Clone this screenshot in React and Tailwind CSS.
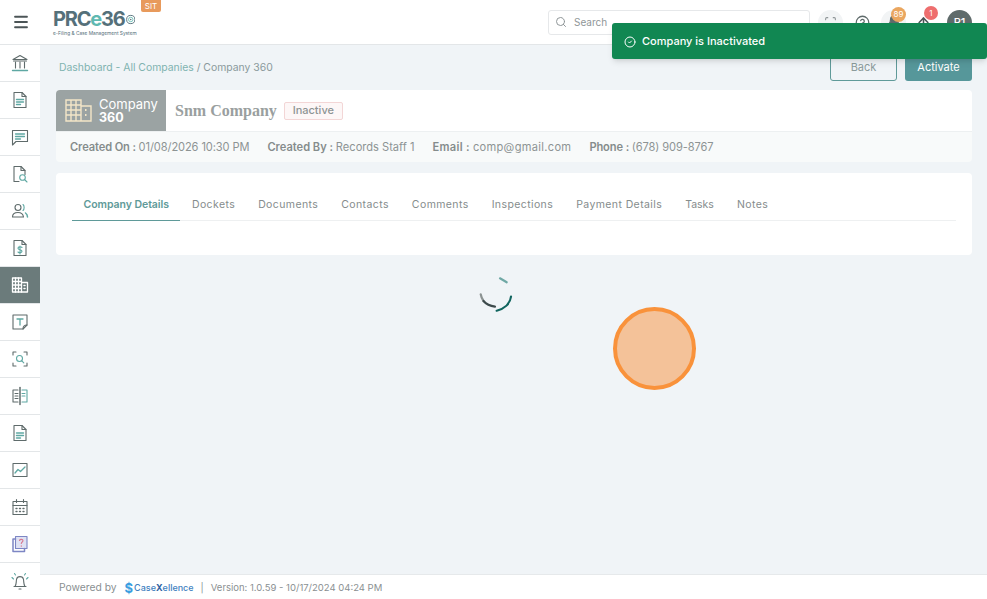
import { useState } from 'react';
import { Menu, Search, Scan, CircleHelp, Bell, ArrowUp, CircleCheck } from 'lucide-react';

const GREY = '#5f6b6b';
const TEAL = '#5fa8a3';

// Icônes de la barre latérale : trait gris + détail teal, comme la maquette
function Glyph({ children, color = GREY, width = 1.1 }) {
  return (
    <svg width="20" height="20" viewBox="0 0 20 20" fill="none" stroke={color} strokeWidth={width} strokeLinecap="round" strokeLinejoin="round">
      {children}
    </svg>
  );
}

const sideIcons = [
  <Glyph key="bank">
    <path d="M3 6.500 10 2.500l7 4H3Z" />
    <path d="M5.500 9v6M10 9v6M14.500 9v6" />
    <path d="M2.500 17.500h15" stroke={TEAL} strokeWidth="1.400" />
    <path d="M3.500 8h13" />
  </Glyph>,
  <Glyph key="doc">
    <path d="M4 2.500h8l4 4v11H4v-15Z" />
    <path d="M12 2.500v4h4" />
    <path d="M6.500 9.500h7M6.500 12h7M6.500 14.500h4" stroke={TEAL} strokeWidth="1.400" />
  </Glyph>,
  <Glyph key="chat">
    <path d="M2.500 3.500h15v11H6L2.500 18v-14.500Z" />
    <path d="M5.500 7h9M5.500 9.500h9M5.500 12h5" stroke={TEAL} strokeWidth="1.300" />
  </Glyph>,
  <Glyph key="filesearch">
    <path d="M9 17.500H4v-15h7l4 4v4" />
    <path d="M11 2.500v4h4" />
    <circle cx="12.500" cy="13.500" r="2.800" stroke={TEAL} />
    <path d="m14.500 15.500 2.500 2.500" stroke={TEAL} />
  </Glyph>,
  <Glyph key="users">
    <circle cx="8" cy="6.500" r="3" />
    <path d="M2.500 16c0-3 2.500-4.500 5.500-4.500s5 1 5.500 4.500h-11Z" />
    <path d="M13 3.500c1.500 1 1.500 5 0 6" stroke={TEAL} />
    <path d="M15.500 12c1.200.8 2 2.300 2 4" stroke={TEAL} strokeWidth="1.500" />
  </Glyph>,
  <Glyph key="invoice">
    <path d="M4 2.500h8l4 4v11H4v-15Z" />
    <path d="M12 2.500v4h4" />
    <path d="M12 9.500c-1-1-4-1-4 .8 0 2 4 1 4 3 0 1.700-3 1.700-4 .7M10 8v8" stroke={TEAL} />
  </Glyph>,
  <Glyph key="building" color="#ffffff" width={1.300}>
    <path d="M2.500 3h9v14h-9V3Z" />
    <path d="M11.500 7.500h6V17h-6" />
    <path d="M2.500 6.500h9M2.500 10h9M2.500 13.500h9M5.500 3v14M8.500 3v14" />
    <path d="M14 10.500h1M14 13.500h1" strokeWidth="1.500" />
  </Glyph>,
  <Glyph key="note">
    <path d="M3 3h14v10l-4 4H3V3Z" />
    <path d="M13 17c0-2 1-4 4-4" />
    <path d="M7 7h6M10 7v6" stroke={TEAL} strokeWidth="1.300" />
  </Glyph>,
  <Glyph key="scan">
    <path d="M6 3H3v3M14 3h3v3M6 17H3v-3M14 17h3v-3" />
    <circle cx="9.500" cy="9.500" r="3" stroke={TEAL} />
    <path d="m11.800 11.800 2 2" stroke={TEAL} />
  </Glyph>,
  <Glyph key="book">
    <path d="M10 1.500v17" strokeWidth="1.500" />
    <path d="M8 4H3v12h5" />
    <path d="M12 4h5v12h-5" stroke={TEAL} />
    <path d="M5 7.500h3M5 10h3M5 12.500h3" />
    <path d="M12 7.500h3M12 10h3" stroke={TEAL} />
  </Glyph>,
  <Glyph key="doc2">
    <path d="M4 2.500h8l4 4v11H4v-15Z" />
    <path d="M12 2.500v4h4" />
    <path d="M6.500 10h7M6.500 12.500h7M6.500 15h4" stroke={TEAL} strokeWidth="1.400" />
  </Glyph>,
  <Glyph key="chart">
    <path d="M3 3.500h14v13H3v-13Z" />
    <path d="m5 13 3-3.500 2.500 2L15 7" stroke={TEAL} strokeWidth="1.300" />
  </Glyph>,
  <Glyph key="calendar">
    <path d="M3 4.500h14v13H3v-13Z" />
    <path d="M3 8.500h14M6.500 2.500v3M13.500 2.500v3" />
    <path d="M6 11.500h1M9.500 11.500h1M13 11.500h1M6 14.500h1M9.500 14.500h1M13 14.500h1" strokeWidth="1.400" />
  </Glyph>,
  <Glyph key="help" color="#7d86c4">
    <path d="M5.500 2.500h11.500v12H5.500v-12Z" fill="#dfe2f3" />
    <path d="M5.500 5H3v12.500h11.500V14.500" strokeWidth="1.500" />
    <path d="M9.500 6.500c.5-1.500 3.500-1.500 3.500.3 0 1.200-1.700 1.200-1.700 2.700M11.300 11.800v.4" stroke="#d9788f" />
  </Glyph>,
  <Glyph key="alarm">
    <path d="M5 15.500c1.500-2 1-4 1.500-7 .7-3.800 6.300-3.800 7 0 .5 3 0 5 1.500 7H5Z" />
    <path d="M4 15.500h12M9 18h2" />
    <path d="M3.500 8 2 6.500M16.500 8 18 6.500M5.500 4 4.500 2.500M14.500 4l1-1.500" stroke={TEAL} />
  </Glyph>,
];

const tabs = ['Company Details', 'Dockets', 'Documents', 'Contacts', 'Comments', 'Inspections', 'Payment Details', 'Tasks', 'Notes'];

function Stat({ label, value, className = '' }) {
  return (
    <span className={`whitespace-nowrap ${className}`}>
      <span className="font-semibold text-[#858c8c]">{label} : </span>
      <span className="text-[#8d9494]">{value}</span>
    </span>
  );
}

export default function App() {
  const [active] = useState(0);

  return (
    <div className="relative flex h-[599px] w-[987px] flex-col overflow-hidden bg-white font-['Inter',sans-serif]">
      {/* En-tête */}
      <header className="flex h-[45px] shrink-0 items-center border-b border-[#e3e6e8] bg-white">
        <div className="flex w-[42px] justify-center">
          <Menu size={18} strokeWidth={2.400} className="text-[#4c5557]" />
        </div>
        <div className="ml-[11px] flex w-[82px] flex-col">
          <div className="flex h-[21px] items-center text-[20px] leading-[21px] font-bold tracking-[-1.200px] text-[#55707a]">
            PRC<span className="text-[#5fb9b1]">e</span>36
            <svg width="14" height="15" viewBox="0 0 15 17" fill="none" className="ml-[1px]">
              <circle cx="7.500" cy="8.500" r="6.500" stroke="#55707a" strokeWidth="1.500" />
              <circle cx="7.500" cy="8.500" r="3.500" stroke="#5fb9b1" strokeWidth="1.300" />
              <circle cx="7.500" cy="8.500" r="1.200" fill="#55707a" />
            </svg>
          </div>
          <span className="text-[4.800px] leading-[6px] whitespace-nowrap text-[#55707a]">e-Filing &amp; Case Management System</span>
        </div>
        <div className="mb-[32px] ml-[6px] flex h-[12px] w-[20px] items-center justify-center rounded-b-[2px] bg-[#e89a5c] text-[8px] text-white">SIT</div>

        <div className="ml-[387px] flex h-[25px] w-[262px] items-center gap-[7px] rounded-[3px] border border-[#e6e8ea] pl-[6px] text-[10px] text-[#8f9698]">
          <Search size={12} className="text-[#8f9698]" />
          Search
        </div>
        <div className="ml-[8px] flex h-[25px] w-[25px] items-center justify-center rounded-full bg-[#f2f4f5]">
          <Scan size={13} className="text-[#8f9698]" />
        </div>
        <CircleHelp size={15} className="ml-[12px] text-[#5f6b6b]" />
        <div className="relative ml-[11px] flex h-[25px] w-[25px] items-center justify-center rounded-full bg-[#f2f4f5]">
          <Bell size={14} className="fill-[#5f6b6b] text-[#5f6b6b]" />
          <span className="absolute -top-[3px] left-[10px] flex h-[15px] w-[15px] items-center justify-center rounded-full bg-[#eaa65f] text-[8px] text-white">89</span>
        </div>
        <div className="relative ml-[5px] flex w-[24px] justify-center">
          <ArrowUp size={15} strokeWidth={2.500} className="text-[#4c5557]" />
          <span className="absolute -top-[9px] left-[13px] flex h-[14px] w-[14px] items-center justify-center rounded-full bg-[#ee6e6e] text-[8px] text-white">1</span>
        </div>
        <div className="ml-[12px] flex h-[25px] w-[25px] items-center justify-center rounded-full bg-[#5f6b6b] text-[11px] font-medium text-white">R1</div>
      </header>

      <div className="flex min-h-0 flex-1">
        {/* Barre latérale */}
        <nav className="flex w-[40px] shrink-0 flex-col bg-white">
          {sideIcons.map((icon, i) => (
            <div
              key={icon.key}
              className={`flex h-[37px] shrink-0 items-center justify-center border-b border-[#e3e6e8] ${i === 6 ? 'bg-[#6b7b7b]' : ''}`}
            >
              {icon}
            </div>
          ))}
        </nav>

        <div className="flex min-w-0 flex-1 flex-col">
          {/* Contenu */}
          <main className="flex min-h-0 flex-1 flex-col bg-[#f0f4f7] pr-[15px] pl-[16px]">
            <div className="flex h-[45px] shrink-0 items-center justify-between text-[10.400px]">
              <span className="pl-[3px] text-[#8a9a9c]">
                <span className="text-[#7fb3b0]">Dashboard - All Companies</span> / Company 360
              </span>
              <div className="flex gap-[8px]">
                <button type="button" className="h-[27px] w-[67px] rounded-[3px] border border-[#5f9a99] text-[11px] text-[#8b9b9b]">Back</button>
                <button type="button" className="h-[27px] w-[67px] rounded-[3px] bg-[#56979a] text-[11px] text-white">Activate</button>
              </div>
            </div>

            <section className="overflow-hidden rounded-[4px]">
              <div className="flex h-[41px] items-center bg-white">
                <div className="flex h-full w-[110px] items-center gap-[7px] bg-[#9ba3a3] pl-[9px]">
                  <svg width="27" height="23" viewBox="0 0 27 23" fill="none" stroke="#f4e6c8" strokeWidth="1.400">
                    <path d="M1 1h15v21H1V1ZM16 7h10v15H16" />
                    <path d="M1 6h15M1 11h15M1 16h15M6 1v21M11 1v21" />
                    <path d="M20 11h1.500M20 16h1.500" strokeWidth="2" />
                  </svg>
                  <div className="text-[13px] leading-[13px] text-white">
                    Company
                    <div className="text-[12.500px] font-bold">360</div>
                  </div>
                </div>
                <h1 className="ml-[9px] font-['Liberation_Serif',serif] text-[16px] font-bold text-[#9a9f9f]">Snm Company</h1>
                <span className="ml-[7px] flex h-[18px] w-[59px] items-center justify-center rounded-[2px] border border-[#f3d6d6] bg-[#fdf7f7] text-[11px] font-medium text-[#8d9494]">Inactive</span>
              </div>
              <div className="flex h-[31px] items-center gap-[18px] border-t border-[#edf0f1] bg-[#f8fafa] pl-[14px] text-[11.100px]">
                <Stat label="Created On" value="01/08/2026 10:30 PM" className="tracking-[-0.100px]" />
                <Stat label="Created By" value="Records Staff 1" />
                <Stat label="Email" value="comp@gmail.com" className="tracking-[0.300px]" />
                <Stat label="Phone" value="(678) 909-8767" className="tracking-[-0.100px]" />
              </div>
            </section>

            <section className="mt-[11px] h-[82px] rounded-[4px] bg-white px-[16px] pt-[17px]">
              <div className="flex h-[31px] border-b border-[#eef0f1]">
                {tabs.map((tab, i) => (
                  <div
                    key={tab}
                    className={`flex h-[31px] items-center border-b px-[11.500px] text-[10.500px] whitespace-nowrap ${
                      i === active
                        ? 'border-[#5f9a99] font-semibold tracking-[-0.050px] text-[#5f9a99]'
                        : tab === 'Tasks'
                          ? 'border-transparent text-[#858c8c]'
                          : 'border-transparent tracking-[0.400px] text-[#858c8c]'
                    }`}
                  >
                    {tab}
                  </div>
                ))}
              </div>
            </section>

            {/* Indicateur de chargement */}
            <div className="mt-[21px] ml-[422px] h-[38px] w-[36px]">
              <svg width="36" height="38" viewBox="0 0 36 38" fill="none" strokeLinecap="round" strokeWidth="2.200">
                <path d="M2.700 18.300C3.200 21 4 23 5.500 25" stroke="#8c9393" />
                <path d="M5.500 25C8.500 28.500 12 30 17 30.700" stroke="#3d4a4c" />
                <path d="M18.700 34.700C26 33 32 28 33 20.700" stroke="#11655f" />
                <path d="M22 2.300 28.700 6.300" stroke="#6fa8a5" />
              </svg>
            </div>
          </main>

          {/* Pied de page */}
          <footer className="flex h-[25px] shrink-0 items-center border-t border-[#e6e9eb] bg-white pt-[2px] pl-[19px] text-[9.500px] text-[#8a9092]">
            <span className="text-[10.300px]">Powered by</span>
            <span className="ml-[8px] flex items-center text-[9px] font-medium text-[#3f7fbf]">
              <span className="mr-[1px] text-[13px] leading-none font-bold text-[#3b9ee0]">$</span>
              Case<b className="text-[#2f5f9f]">X</b>ellence
            </span>
            <span className="mx-[7px]">|</span>
            Version: 1.0.59 - 10/17/2024 04:24 PM
          </footer>
        </div>
      </div>

      {/* Notification */}
      <div className="absolute top-[23px] left-[612px] flex h-[36px] w-[375px] items-center gap-[6px] rounded-[3px] bg-[#118752] pt-[1px] pl-[12px] text-[11px] font-medium text-white shadow-md">
        <CircleCheck size={12} />
        Company is Inactivated
      </div>

      {/* Repère de clic */}
      <div className="absolute top-[307px] left-[613px] h-[83px] w-[83px] rounded-full border-[4px] border-[#f9923b] bg-[#f4c299]" />
    </div>
  );
}
